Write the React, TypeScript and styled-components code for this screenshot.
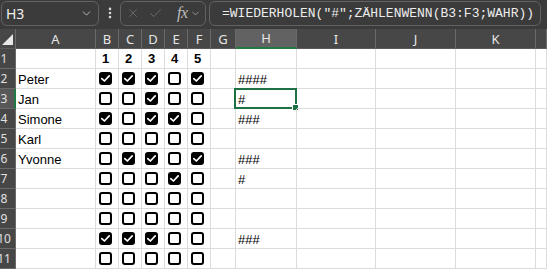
import styled, { createGlobalStyle } from "styled-components";
import { Check, ChevronDown, EllipsisVertical, X } from "lucide-react";

const GlobalStyle = createGlobalStyle`
  html, body {
    margin: 0;
    padding: 0;
    background: #ffffff;
    overflow: hidden;
  }
  body {
    width: 547px;
    height: 269px;
  }
`;

const COLS = ["A", "B", "C", "D", "E", "F", "G", "H", "I", "J", "K", ""];

type Row = { name: string; checks: number[] };

const rows: Row[] = [
  { name: "Peter", checks: [1, 1, 1, 0, 1] },
  { name: "Jan", checks: [0, 0, 1, 0, 0] },
  { name: "Simone", checks: [1, 0, 1, 1, 0] },
  { name: "Karl", checks: [0, 0, 0, 0, 0] },
  { name: "Yvonne", checks: [0, 1, 1, 0, 1] },
  { name: "", checks: [0, 0, 0, 1, 0] },
  { name: "", checks: [0, 0, 0, 0, 0] },
  { name: "", checks: [0, 0, 0, 0, 0] },
  { name: "", checks: [1, 1, 1, 0, 0] },
  { name: "", checks: [0, 0, 0, 0, 0] },
];

const Page = styled.div`
  display: flex;
  flex-direction: column;
  width: 547px;
  height: 269px;
  overflow: hidden;
`;

const TopBar = styled.div`
  display: flex;
  align-items: center;
  height: 38px;
  padding: 0 6px 3px 1px;
  box-sizing: border-box;
  background: #3b3b3b;
`;

const Field = styled.div`
  display: flex;
  align-items: center;
  height: 25px;
  box-sizing: border-box;
  border: 1px solid #626262;
  border-radius: 6px;
`;

const NameBox = styled(Field)`
  width: 98px;
  padding: 0 5px 0 4px;
  justify-content: space-between;
  color: #f0f0f0;
  font: 14px "Noto Sans", sans-serif;
`;

const Dots = styled.div`
  display: flex;
  width: 21px;
  justify-content: center;
  color: #d8d8d8;
`;

const FxGroup = styled(Field)`
  width: 86px;
  padding: 0 3px 0 5px;
  gap: 8px;
  color: #7a7a7a;
`;

const Fx = styled.span`
  font: italic 16px "Liberation Serif", serif;
  color: #bdbdbd;
  margin-left: 6px;
  letter-spacing: -0.5px;
`;

const FxChevron = styled.span`
  display: flex;
  margin-left: -6px;
  color: #bdbdbd;
`;

const FormulaBox = styled(Field)`
  flex: 1;
  margin-left: 3px;
  padding-left: 12px;
  color: #ececec;
  font: 13px "Liberation Mono", monospace;
  white-space: nowrap;
  overflow: hidden;
`;

const Sheet = styled.div`
  display: grid;
  grid-template-columns: 16px 80px repeat(5, 23px) 25px 61px 79px 80px 80px 1fr;
  grid-auto-rows: 20px;
  background: #ffffff;
`;

const Corner = styled.div`
  position: relative;
  background: #474747;
  border-right: 1px solid #6a6a6a;
  border-bottom: 1px solid #5a5a5a;
  box-sizing: border-box;
  overflow: hidden;
`;

const Triangle = styled.div`
  position: absolute;
  right: 2px;
  bottom: 3px;
  width: 0;
  height: 0;
  border-left: 11px solid transparent;
  border-bottom: 11px solid #e8e8e8;
`;

const ColHeader = styled.div<{ $active?: boolean }>`
  display: flex;
  align-items: center;
  justify-content: center;
  background: ${(p) => (p.$active ? "#626262" : "#474747")};
  color: #e6e6e6;
  font: 13px "Noto Sans", sans-serif;
  border-right: 1px solid #6a6a6a;
  border-bottom: ${(p) => (p.$active ? "2px solid #1f7a46" : "1px solid #5a5a5a")};
  box-sizing: border-box;
`;

const RowHeader = styled.div<{ $active?: boolean }>`
  display: flex;
  align-items: center;
  background: ${(p) => (p.$active ? "#585858" : "#474747")};
  color: #e0e0e0;
  font: 12px "Noto Sans", sans-serif;
  border-bottom: 1px solid #6a6a6a;
  border-right: ${(p) => (p.$active ? "2px solid #1f7a46" : "1px solid #6a6a6a")};
  box-sizing: border-box;
  white-space: nowrap;
  overflow: hidden;
`;

const RowLabel = styled.span`
  flex: none;
  width: 24px;
  margin-left: -8px;
  text-align: center;
`;

const Cell = styled.div<{ $center?: boolean; $bold?: boolean }>`
  position: relative;
  display: flex;
  align-items: center;
  justify-content: ${(p) => (p.$center ? "center" : "flex-start")};
  padding: ${(p) => (p.$center ? "0 3px 0 0" : "1px 0 0 2px")};
  color: #000000;
  font: ${(p) => (p.$bold ? "bold 13px" : "13px")} "Liberation Sans", Arial, sans-serif;
  border-right: 1px solid #dcdcdc;
  border-bottom: 1px solid #dcdcdc;
  box-sizing: border-box;
  white-space: nowrap;
`;

const Box = styled.div<{ $checked?: boolean }>`
  display: flex;
  align-items: center;
  justify-content: center;
  width: 13px;
  height: 13px;
  box-sizing: border-box;
  border: 2px solid #000000;
  border-radius: 3px;
  background: ${(p) => (p.$checked ? "#000000" : "#ffffff")};
`;

const Selection = styled.div`
  position: absolute;
  left: -2px;
  top: -1px;
  right: -1px;
  bottom: -1px;
  border: 2px solid #1e7145;
  pointer-events: none;
`;

const Handle = styled.div`
  position: absolute;
  right: -4px;
  bottom: -4px;
  width: 5px;
  height: 5px;
  background: #1e7145;
  border: 1px solid #ffffff;
`;

function CheckMark() {
  return (
    <svg width="9" height="9" viewBox="0 0 9 9" fill="none">
      <path d="M0.8 4.6 L3.4 7 L8.2 1.8" stroke="#ffffff" strokeWidth="1.7" strokeLinecap="round" strokeLinejoin="round" />
    </svg>
  );
}

export default function App() {
  return (
    <>
      <GlobalStyle />
      <Page>
        <TopBar>
          <NameBox>
            <span>H3</span>
            <ChevronDown size={13} strokeWidth={1.5} color="#cfcfcf" />
          </NameBox>
          <Dots>
            <EllipsisVertical size={14} strokeWidth={2.5} />
          </Dots>
          <FxGroup>
            <X size={14} strokeWidth={1.2} />
            <Check size={15} strokeWidth={1.2} />
            <Fx>fx</Fx>
            <FxChevron>
              <ChevronDown size={11} strokeWidth={1.5} />
            </FxChevron>
          </FxGroup>
          <FormulaBox>=WIEDERHOLEN("#";ZÄHLENWENN(B3:F3;WAHR))</FormulaBox>
        </TopBar>
        <Sheet>
          <Corner>
            <Triangle />
          </Corner>
          {COLS.map((c, i) => (
            <ColHeader key={i} $active={c === "H"}>
              {c}
            </ColHeader>
          ))}

          <RowHeader>
            <RowLabel>1</RowLabel>
          </RowHeader>
          <Cell />
          {[1, 2, 3, 4, 5].map((n) => (
            <Cell key={n} $center $bold>
              {n}
            </Cell>
          ))}
          <Cell />
          <Cell />
          <Cell />
          <Cell />
          <Cell />
          <Cell />

          {rows.map((r, i) => {
            const count = r.checks.filter(Boolean).length;
            const rowNum = i + 2;
            return [
              <RowHeader key={`h${i}`} $active={rowNum === 3}>
                <RowLabel>{rowNum}</RowLabel>
              </RowHeader>,
              <Cell key={`a${i}`}>{r.name}</Cell>,
              ...r.checks.map((v, j) => (
                <Cell key={`c${i}${j}`} $center>
                  <Box $checked={!!v}>{v ? <CheckMark /> : null}</Box>
                </Cell>
              )),
              <Cell key={`g${i}`} />,
              <Cell key={`x${i}`}>
                {"#".repeat(count)}
                {rowNum === 3 && (
                  <Selection>
                    <Handle />
                  </Selection>
                )}
              </Cell>,
              <Cell key={`i${i}`} />,
              <Cell key={`j${i}`} />,
              <Cell key={`k${i}`} />,
              <Cell key={`l${i}`} />,
            ];
          })}
        </Sheet>
      </Page>
    </>
  );
}
